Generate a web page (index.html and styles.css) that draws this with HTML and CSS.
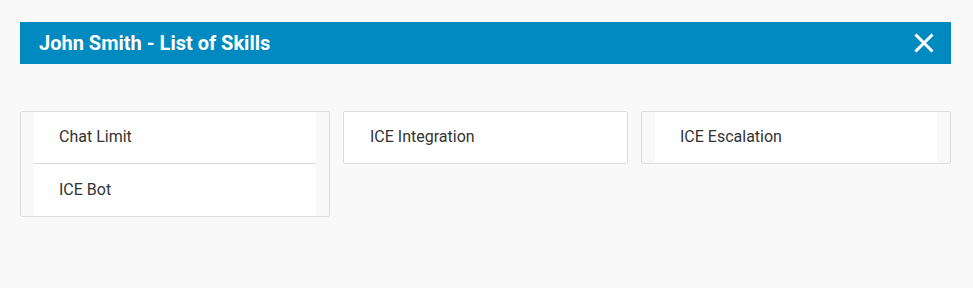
FILE: index.html
```html
<!DOCTYPE html>
<html lang="en">
<head>
<meta charset="utf-8">
<title>John Smith - List of Skills</title>
<link rel="stylesheet" href="styles.css">
</head>
<body>
<div class="dialog">
  <div class="header">
    <h1 class="title">John Smith - List of Skills</h1>
    <button class="close" aria-label="Close">
      <svg width="20" height="20" viewBox="0 0 20 20"><path d="M2.5 2.5 L17.5 17.5 M17.5 2.5 L2.5 17.5" stroke="#fff" stroke-width="3" stroke-linecap="square" fill="none"/></svg>
    </button>
  </div>
  <div class="cards">
    <div class="card card-wide">
      <div class="item">Chat Limit</div>
      <div class="item">ICE Bot</div>
    </div>
    <div class="card card-full">
      <div class="item">ICE Integration</div>
    </div>
    <div class="card card-wide">
      <div class="item">ICE Escalation</div>
    </div>
  </div>
</div>
</body>
</html>
```
FILE: styles.css
```css
html, body {
  margin: 0;
  padding: 0;
  background: #f9f9f9;
  font-family: Roboto, "Liberation Sans", Arial, sans-serif;
}
.dialog {
  padding: 22px 0 0 20px;
  width: 931px;
}
.header {
  height: 42px;
  background: #008abf;
  display: flex;
  align-items: center;
  justify-content: space-between;
  padding: 0 17px 0 19px;
}
.title {
  margin: 0;
  color: #fff;
  font-size: 20px;
  font-weight: 700;
  line-height: 42px;
}
.close {
  background: none;
  border: 0;
  padding: 0;
  width: 20px;
  height: 20px;
  display: flex;
  cursor: pointer;
}
.cards {
  margin-top: 47px;
  display: flex;
  align-items: flex-start;
  gap: 13px;
}
.card {
  border: 1px solid #dcdcdc;
  border-radius: 2px;
  box-sizing: border-box;
  flex: none;
}
.card-wide {
  width: 310px;
  padding: 0 13px;
}
.card-full {
  width: 285px;
  background: #fff;
}
.item {
  background: #fff;
  height: 51px;
  box-sizing: border-box;
  display: flex;
  align-items: center;
  padding: 0 0 2px 25px;
  font-size: 16px;
  color: #333;
}
.card-full .item {
  padding-left: 26px;
}
.item + .item {
  height: 53px;
  border-top: 1px solid #dcdcdc;
}
```
